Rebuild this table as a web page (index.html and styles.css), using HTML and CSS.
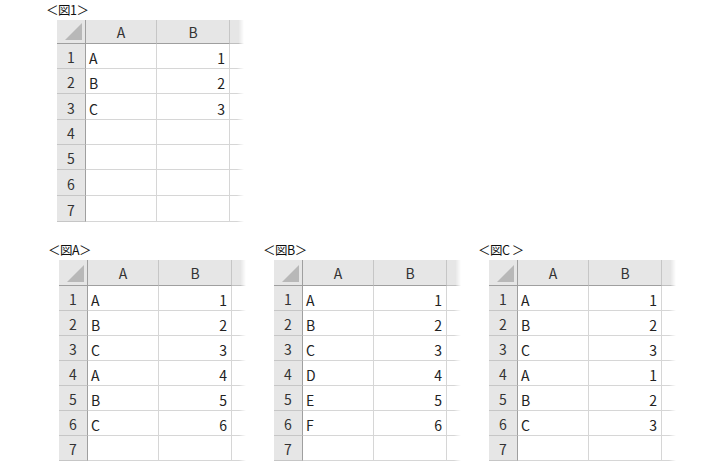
FILE: index.html
```html
<!DOCTYPE html>
<html lang="ja">
<head>
<meta charset="utf-8">
<link rel="stylesheet" href="styles.css">
</head>
<body>
<div class="page">
  <div class="fig fig-top">
    <div class="label">＜図1＞</div>
    <div class="sheet sheet-top">
      <div class="corner"><span class="tri"></span></div><div class="ch">A</div><div class="ch">B</div><div class="ch ext"></div>
      <div class="rh">1</div><div class="c">A</div><div class="c n">1</div><div class="c ext"></div>
      <div class="rh">2</div><div class="c">B</div><div class="c n">2</div><div class="c ext"></div>
      <div class="rh">3</div><div class="c">C</div><div class="c n">3</div><div class="c ext"></div>
      <div class="rh">4</div><div class="c"></div><div class="c n"></div><div class="c ext"></div>
      <div class="rh">5</div><div class="c"></div><div class="c n"></div><div class="c ext"></div>
      <div class="rh">6</div><div class="c"></div><div class="c n"></div><div class="c ext"></div>
      <div class="rh">7</div><div class="c"></div><div class="c n"></div><div class="c ext"></div>
    </div>
  </div>
  <div class="row">
    <div class="fig">
      <div class="label">＜図A＞</div>
      <div class="sheet sheet-bottom">
        <div class="corner"><span class="tri"></span></div><div class="ch">A</div><div class="ch">B</div><div class="ch ext"></div>
        <div class="rh">1</div><div class="c">A</div><div class="c n">1</div><div class="c ext"></div>
        <div class="rh">2</div><div class="c">B</div><div class="c n">2</div><div class="c ext"></div>
        <div class="rh">3</div><div class="c">C</div><div class="c n">3</div><div class="c ext"></div>
        <div class="rh">4</div><div class="c">A</div><div class="c n">4</div><div class="c ext"></div>
        <div class="rh">5</div><div class="c">B</div><div class="c n">5</div><div class="c ext"></div>
        <div class="rh">6</div><div class="c">C</div><div class="c n">6</div><div class="c ext"></div>
        <div class="rh">7</div><div class="c"></div><div class="c n"></div><div class="c ext"></div>
      </div>
    </div>
    <div class="fig">
      <div class="label">＜図B＞</div>
      <div class="sheet sheet-bottom">
        <div class="corner"><span class="tri"></span></div><div class="ch">A</div><div class="ch">B</div><div class="ch ext"></div>
        <div class="rh">1</div><div class="c">A</div><div class="c n">1</div><div class="c ext"></div>
        <div class="rh">2</div><div class="c">B</div><div class="c n">2</div><div class="c ext"></div>
        <div class="rh">3</div><div class="c">C</div><div class="c n">3</div><div class="c ext"></div>
        <div class="rh">4</div><div class="c">D</div><div class="c n">4</div><div class="c ext"></div>
        <div class="rh">5</div><div class="c">E</div><div class="c n">5</div><div class="c ext"></div>
        <div class="rh">6</div><div class="c">F</div><div class="c n">6</div><div class="c ext"></div>
        <div class="rh">7</div><div class="c"></div><div class="c n"></div><div class="c ext"></div>
      </div>
    </div>
    <div class="fig">
      <div class="label">＜図C ＞</div>
      <div class="sheet sheet-bottom">
        <div class="corner"><span class="tri"></span></div><div class="ch">A</div><div class="ch">B</div><div class="ch ext"></div>
        <div class="rh">1</div><div class="c">A</div><div class="c n">1</div><div class="c ext"></div>
        <div class="rh">2</div><div class="c">B</div><div class="c n">2</div><div class="c ext"></div>
        <div class="rh">3</div><div class="c">C</div><div class="c n">3</div><div class="c ext"></div>
        <div class="rh">4</div><div class="c">A</div><div class="c n">1</div><div class="c ext"></div>
        <div class="rh">5</div><div class="c">B</div><div class="c n">2</div><div class="c ext"></div>
        <div class="rh">6</div><div class="c">C</div><div class="c n">3</div><div class="c ext"></div>
        <div class="rh">7</div><div class="c"></div><div class="c n"></div><div class="c ext"></div>
      </div>
    </div>
  </div>
</div>
</body>
</html>
```

FILE: styles.css
```css
* { box-sizing: border-box; }
html, body { margin: 0; padding: 0; background: #fff; }
body {
  font-family: "Noto Sans CJK JP", "Noto Sans", sans-serif;
  color: #222;
}
.page {
  padding: 0 0 0 46px;
}
.fig {
  display: flex;
  flex-direction: column;
  width: 198px;
}
.label {
  font-size: 12.5px;
  line-height: 20px;
  height: 20px;
  color: #111;
  letter-spacing: -0.5px;
}
.sheet {
  margin-left: 11px;
  display: grid;
  grid-template-columns: 29px 71px 73px 14px;
  font-size: 14px;
}
.sheet-top {
  grid-template-rows: 24px 25px 25px 26px 25px 25px 26px 26px;
}
.sheet-bottom {
  grid-template-rows: 26px repeat(7, 25px);
}
.row {
  display: flex;
  gap: 17px;
  margin-top: 18px;
  padding-left: 2px;
}
.corner {
  background: #e6e6e6;
  border-right: 1px solid #9f9f9f;
  border-bottom: 1px solid #9f9f9f;
  position: relative;
}
.tri {
  position: absolute;
  right: 3px;
  bottom: 3px;
  width: 0;
  height: 0;
  border-left: 17px solid transparent;
  border-bottom: 17px solid #b8b8b8;
}
.ch {
  background: #e6e6e6;
  border-right: 1px solid #c6c6c6;
  border-bottom: 1px solid #9f9f9f;
  display: flex;
  align-items: center;
  justify-content: center;
  color: #333;
  padding-top: 1px;
}
.ch.ext {
  border-right: none;
  border-bottom: none;
  box-shadow: inset 0 -1px 0 #bfbfbf;
  -webkit-mask-image: linear-gradient(to right, #000 60%, transparent 100%);
  mask-image: linear-gradient(to right, #000 60%, transparent 100%);
}
.rh {
  background: #e6e6e6;
  border-right: 1px solid #9f9f9f;
  border-bottom: 1px solid #c6c6c6;
  display: flex;
  align-items: center;
  justify-content: center;
  color: #333;
  padding-top: 2px;
}
.c {
  border-right: 1px solid #d6d6d6;
  border-bottom: 1px solid #d6d6d6;
  display: flex;
  align-items: center;
  padding: 4px 3px 0 3px;
  color: #222;
}
.c.n { justify-content: flex-end; padding-right: 4px; }
.c.ext {
  border-right: none;
  -webkit-mask-image: linear-gradient(to right, #000 50%, transparent 100%);
  mask-image: linear-gradient(to right, #000 50%, transparent 100%);
}
```
